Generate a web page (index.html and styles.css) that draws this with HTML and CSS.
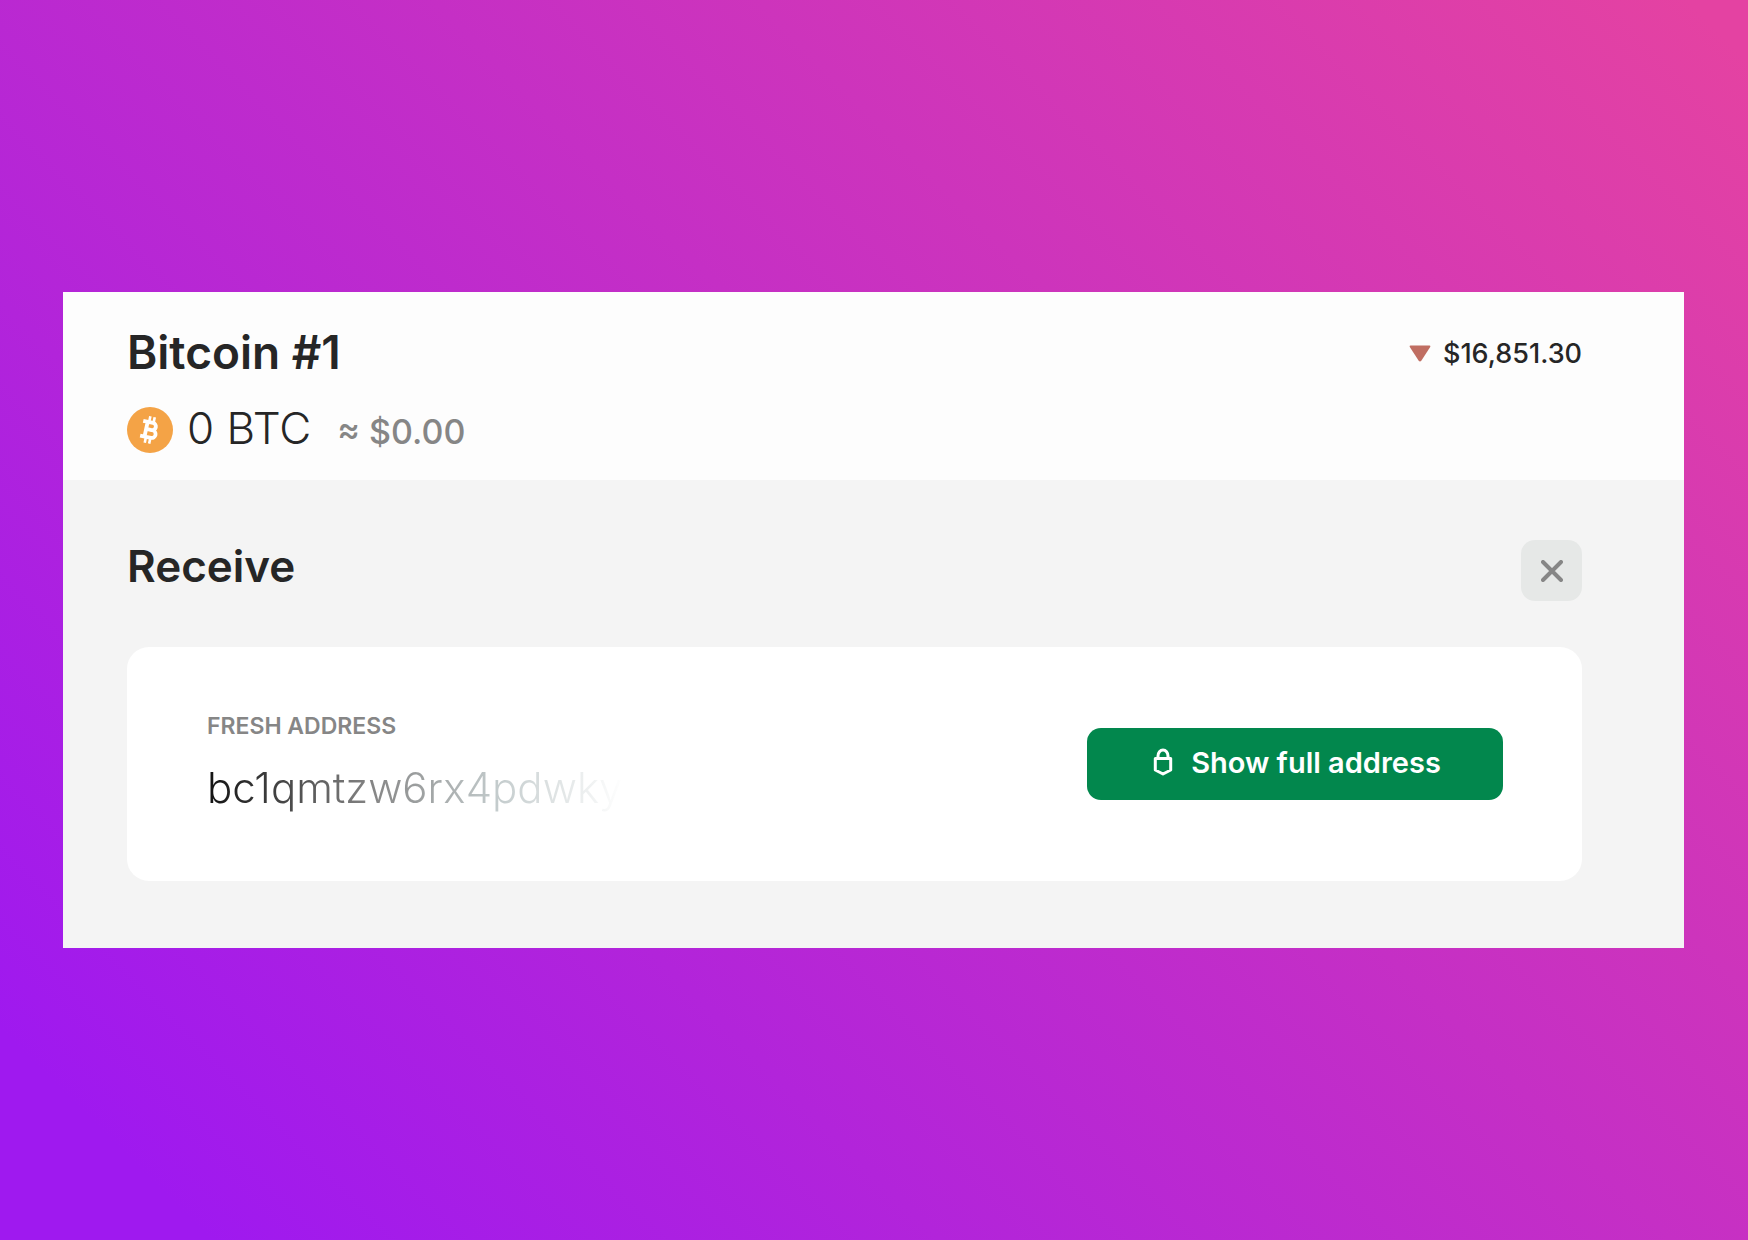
FILE: index.html
```
<!DOCTYPE html>
<html lang="en">
<head>
    <meta charset="UTF-8">
    <meta name="viewport" content="width=device-width, initial-scale=1.0">
    <title>Receive Bitcoin</title>
    <link rel="stylesheet" href="styles.css">
</head>
<body>

    <main class="wallet">
        <header class="account">
            <div class="account-top">
                <h1>Bitcoin #1</h1>
                <div class="price">
                    <svg class="price-down" viewBox="0 0 22 17" aria-hidden="true">
                        <path d="M1.5 0.5h19q1.300 0.300 0.700 1.500L12.300 15.800q-1.300 1.300-2.600 0L0.800 2q-0.600-1.200 0.700-1.500z" fill="#c06e62"/>
                    </svg>
                    <span>$16,851.30</span>
                </div>
            </div>
            <div class="balance">
                <svg class="coin" viewBox="0 0 46 46" aria-hidden="true">
                    <circle cx="23" cy="23" r="23" fill="#f4a346"/>
                    <g transform="rotate(12 23 23)" fill="none" stroke="#fff">
                        <path d="M14.500 15.500H24.500a3.600 3.600 0 0 1 0 7.200H19.500M24.500 22.700h1a3.900 3.900 0 0 1 0 7.800H14.500M19 15.500v15" stroke-width="3.800"/>
                        <path d="M20.500 9.500v5M25 9.500v5M20.500 31.500v5M25 31.500v5" stroke-width="2.600"/>
                    </g>
                </svg>
                <div class="amounts">
                    <span class="amount">0 BTC</span>
                    <span class="fiat">≈ $0.00</span>
                </div>
            </div>
        </header>

        <section class="receive">
            <div class="receive-top">
                <h2>Receive</h2>
                <button type="button" class="close-btn" aria-label="Close">
                    <svg viewBox="0 0 22 22" aria-hidden="true">
                        <path d="M2 2l18 18M20 2L2 20" fill="none" stroke="#868686" stroke-width="4" stroke-linecap="round"/>
                    </svg>
                </button>
            </div>

            <div class="card">
                <div class="address-box">
                    <h3>FRESH ADDRESS</h3>
                    <p class="address">bc1qmtzw6rx4pdwky</p>
                </div>
                <button type="button" class="show-btn">
                    <svg viewBox="0 0 20 28" aria-hidden="true">
                        <path d="M2.300 10.500h15.400v11.500L10 26l-7.700-4zM5 10.500V8a5 6 0 0 1 10 0v2.500" fill="none" stroke="#fff" stroke-width="3" stroke-linejoin="round"/>
                    </svg>
                    Show full address
                </button>
            </div>
        </section>
    </main>

</body>
</html>
```
FILE: styles.css
```
* {
    box-sizing: border-box;
}

body {
    font-family: Inter, "Liberation Sans", sans-serif;
    color: #262626;
    background: linear-gradient(45deg, #9f19ef 7%, #c52fc5 56%, #e442a2 98%);
    margin: 0;
    padding: 0 64px 0 63px;
    min-height: 100vh;
    display: flex;
    align-items: center;
}

h1, h2, h3, p {
    margin: 0;
}

h1, h2 {
    font-weight: 600;
    line-height: 52px;
}

h1 {
    font-size: 46px;
}

h2 {
    font-size: 44px;
}

button {
    border: none;
    font-family: inherit;
    cursor: pointer;
    display: flex;
    align-items: center;
    justify-content: center;
}

.wallet {
    flex: 1;
    background-color: #f4f4f4;
}

/* account header */
.account {
    background-color: #fdfdfd;
    padding: 34px 102px 27px 64px;
}

.account-top, .receive-top, .card {
    display: flex;
    align-items: center;
    justify-content: space-between;
}

.price {
    display: flex;
    align-items: center;
    gap: 12px;
    padding-top: 3px;
    font-size: 27px;
    font-weight: 500;
}

.price-down {
    width: 22px;
    height: 17px;
}

.balance {
    display: flex;
    align-items: center;
    gap: 14px;
    height: 46px;
    margin-top: 29px;
}

.coin {
    width: 46px;
    height: 46px;
}

.amounts {
    display: flex;
    align-items: baseline;
    gap: 26px;
    padding-bottom: 4px;
}

.amount {
    font-size: 44px;
    font-weight: 300;
}

.fiat {
    font-size: 34px;
    font-weight: 500;
    color: #868686;
}

/* receive section */
.receive {
    padding: 60px 102px 67px 64px;
}

.receive-top {
    align-items: flex-start;
}

.close-btn {
    width: 61px;
    height: 61px;
    padding: 0;
    border-radius: 14px;
    background-color: #e6e8e7;
}

.close-btn svg {
    width: 22px;
    height: 22px;
}

.card {
    min-height: 234px;
    margin-top: 46px;
    padding: 64px 79px 64px 80px;
    border-radius: 22px;
    background-color: #fff;
}

h3 {
    font-size: 23px;
    font-weight: 600;
    line-height: 28px;
    color: #868686;
}

.address {
    width: 416px;
    margin-top: 20px;
    font-size: 42px;
    font-weight: 300;
    line-height: 56px;
    background: linear-gradient(90deg, #111, #868686 40%, #c4cccd 70%, #fff);
    -webkit-background-clip: text;
    background-clip: text;
    color: transparent;
}

.show-btn {
    width: 416px;
    height: 72px;
    gap: 18px;
    border-radius: 14px;
    background-color: #02874d;
    color: #fff;
    font-size: 29px;
    font-weight: 600;
    padding: 0 4px 4px 8px;
}

.show-btn svg {
    width: 20px;
    height: 28px;
}
```
